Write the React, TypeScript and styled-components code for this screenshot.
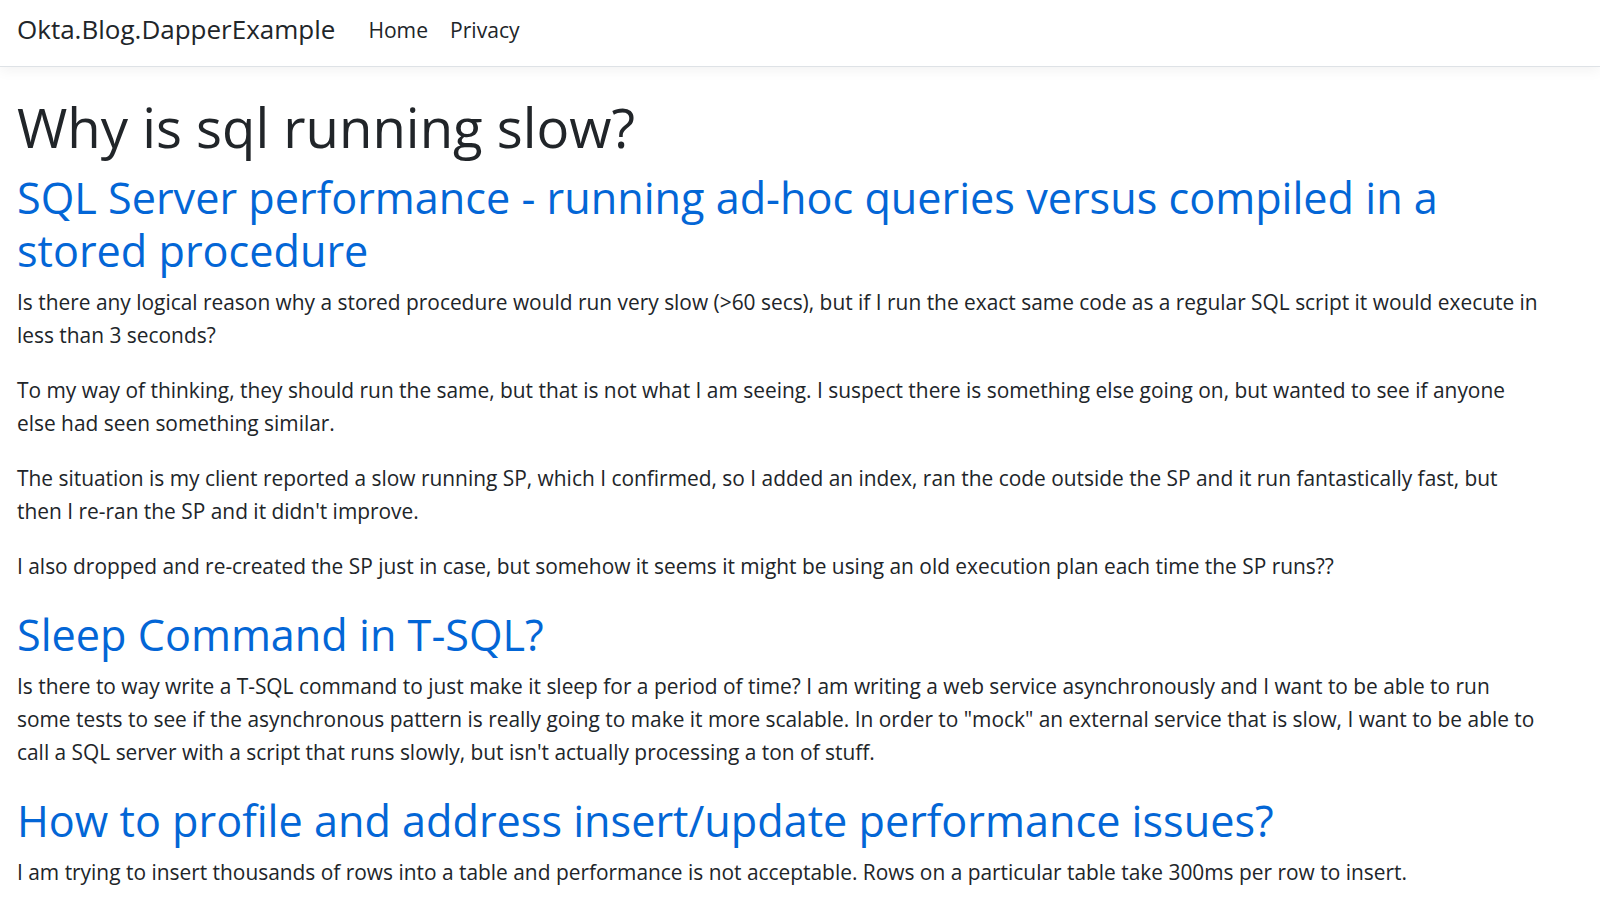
import React from 'react';
import styled, { createGlobalStyle } from 'styled-components';

type Question = {
  title: string;
  body: string[];
};

const questions: Question[] = [
  {
    title: 'SQL Server performance - running ad-hoc queries versus compiled in a stored procedure',
    body: [
      'Is there any logical reason why a stored procedure would run very slow (>60 secs), but if I run the exact same code as a regular SQL script it would execute in less than 3 seconds?',
      'To my way of thinking, they should run the same, but that is not what I am seeing. I suspect there is something else going on, but wanted to see if anyone else had seen something similar.',
      "The situation is my client reported a slow running SP, which I confirmed, so I added an index, ran the code outside the SP and it run fantastically fast, but then I re-ran the SP and it didn't improve.",
      'I also dropped and re-created the SP just in case, but somehow it seems it might be using an old execution plan each time the SP runs??',
    ],
  },
  {
    title: 'Sleep Command in T-SQL?',
    body: [
      'Is there to way write a T-SQL command to just make it sleep for a period of time? I am writing a web service asynchronously and I want to be able to run some tests to see if the asynchronous pattern is really going to make it more scalable. In order to "mock" an external service that is slow, I want to be able to call a SQL server with a script that runs slowly, but isn\'t actually processing a ton of stuff.',
    ],
  },
  {
    title: 'How to profile and address insert/update performance issues?',
    body: [
      'I am trying to insert thousands of rows into a table and performance is not acceptable. Rows on a particular table take 300ms per row to insert.',
    ],
  },
];

const GlobalStyle = createGlobalStyle`
  *, *::before, *::after {
    box-sizing: border-box;
  }

  body {
    margin: 0;
    background: #fff;
    color: #212529;
    font-family: 'Open Sans', 'Noto Sans', sans-serif;
    font-size: 20.9px;
    line-height: 33px;
  }
`;

const Navbar = styled.header`
  display: flex;
  align-items: center;
  gap: 33px;
  height: 67px;
  padding: 0 17px 8px;
  background: #fff;
  border-bottom: 1px solid #dee2e6;
  box-shadow: 0 4px 12px rgba(0, 0, 0, 0.05);
`;

const Brand = styled.a`
  color: #212529;
  font-size: 26px;
  text-decoration: none;
`;

const NavLinks = styled.nav`
  display: flex;
  gap: 22px;
`;

const NavLink = styled.a`
  color: #212529;
  font-size: 21.1px;
  text-decoration: none;
`;

const Main = styled.main`
  max-width: 1561px;
  padding: 27px 17px 40px;
`;

const PageTitle = styled.h1`
  margin: 0 0 11px;
  font-size: 54.5px;
  font-weight: 500;
  line-height: 66px;
`;

// padding, not margin, so it doesn't collapse into the paragraph's margin above
const Section = styled.section`
  & + & {
    padding-top: 3px;
  }
`;

const QuestionTitle = styled.h2`
  margin: 0 0 9px;
  font-size: 43.2px;
  font-weight: 500;
  line-height: 53px;

  a {
    color: #0366d6;
    text-decoration: none;
  }
`;

const Paragraph = styled.p`
  margin: 0 0 22px;
`;

export default function App() {
  return (
    <>
      <GlobalStyle />
      <Navbar>
        <Brand href="#">Okta.Blog.DapperExample</Brand>
        <NavLinks>
          <NavLink href="#">Home</NavLink>
          <NavLink href="#">Privacy</NavLink>
        </NavLinks>
      </Navbar>
      <Main>
        <PageTitle>Why is sql running slow?</PageTitle>
        {questions.map((q) => (
          <Section key={q.title}>
            <QuestionTitle>
              <a href="#">{q.title}</a>
            </QuestionTitle>
            {q.body.map((text, i) => (
              <Paragraph key={i}>{text}</Paragraph>
            ))}
          </Section>
        ))}
      </Main>
    </>
  );
}
